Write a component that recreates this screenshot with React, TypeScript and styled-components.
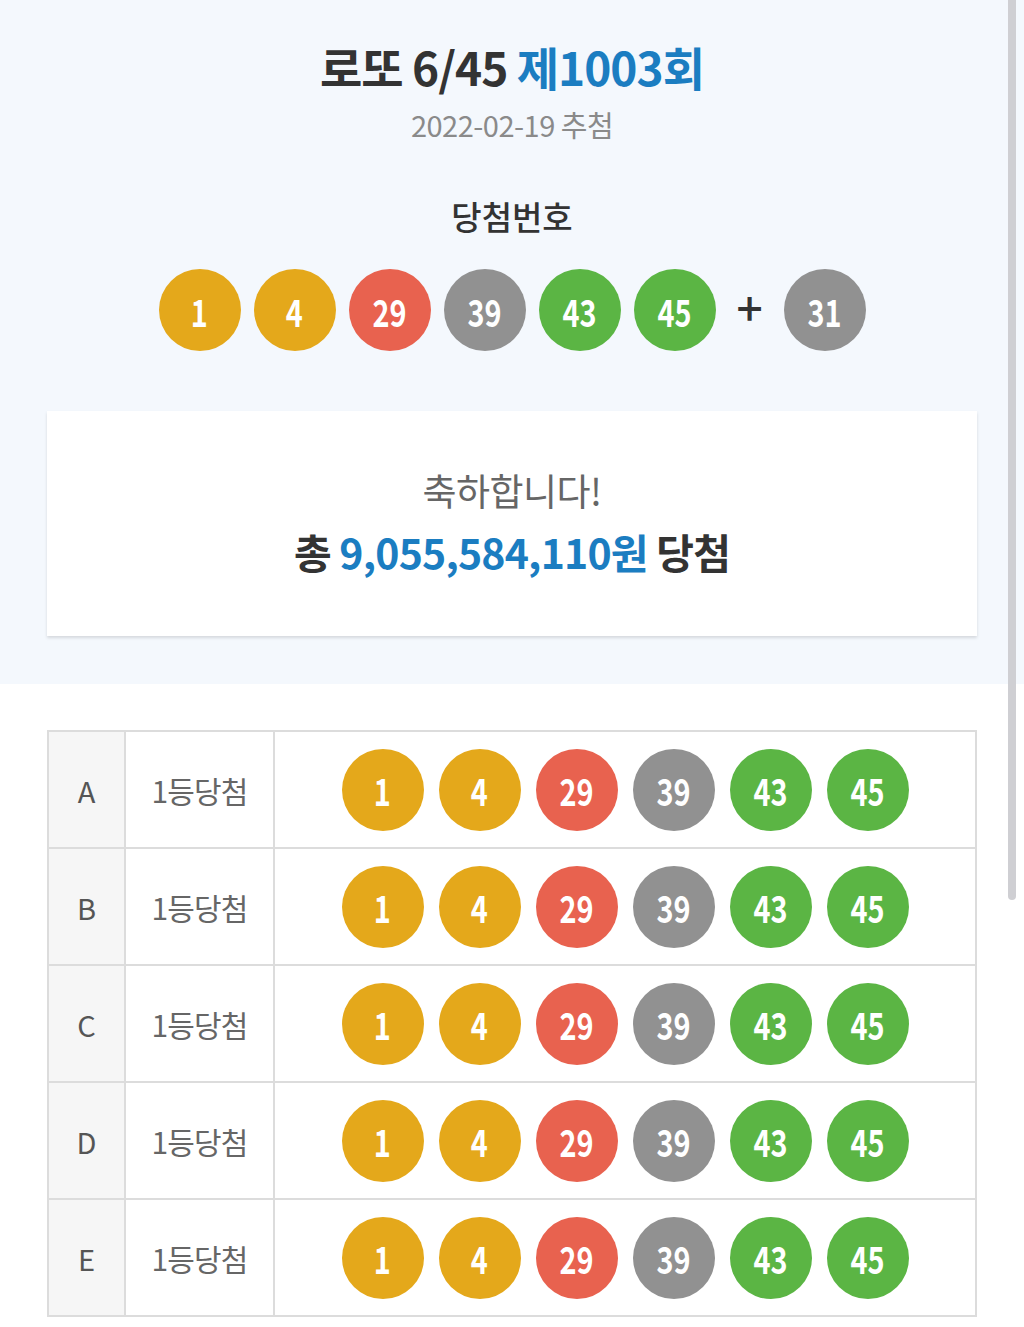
import React from 'react';
import styled, { createGlobalStyle } from 'styled-components';

const GlobalStyle = createGlobalStyle`
  html, body {
    margin: 0;
    padding: 0;
    background: #ffffff;
  }
  body {
    font-family: "Noto Sans CJK KR", "Noto Sans", sans-serif;
    color: #333;
  }
  * {
    box-sizing: border-box;
  }
`;

const Page = styled.div`
  position: relative;
  width: 1024px;
  min-height: 1327px;
  background: #fff;
`;

const Hero = styled.section`
  background: #f4f8fd;
  padding: 37px 47px 48px;
  display: flex;
  flex-direction: column;
  align-items: center;
`;

const Title = styled.h1`
  margin: 0;
  font-size: 46px;
  line-height: 58px;
  font-weight: 700;
  color: #333;
  letter-spacing: -1px;

  em {
    font-style: normal;
    color: #1b7dc1;
  }
`;

const DrawDate = styled.div`
  margin-top: 11px;
  font-size: 29px;
  line-height: 36px;
  color: #8a8a8a;
  letter-spacing: -0.5px;
`;

const SectionLabel = styled.h2`
  margin: 54px 0 0;
  font-size: 33px;
  line-height: 40px;
  font-weight: 500;
  color: #333;
`;

const BallRow = styled.div<{ $gap: number }>`
  display: flex;
  align-items: center;
  justify-content: center;
  gap: ${(p) => p.$gap}px;
`;

const WinRow = styled(BallRow)`
  margin-top: 33px;
`;

const BALL_COLORS: Record<string, string> = {
  yellow: '#e4a81b',
  blue: '#69c8f2',
  red: '#e8624f',
  gray: '#919191',
  green: '#5bb544',
};

const ballColor = (n: number) => {
  if (n <= 10) return BALL_COLORS.yellow;
  if (n <= 20) return BALL_COLORS.blue;
  if (n <= 30) return BALL_COLORS.red;
  if (n <= 40) return BALL_COLORS.gray;
  return BALL_COLORS.green;
};

const Ball = styled.span<{ $color: string }>`
  width: 82px;
  height: 82px;
  border-radius: 50%;
  background: ${(p) => p.$color};
  color: #fff;
  display: inline-flex;
  align-items: center;
  justify-content: center;
  font-size: 38px;
  font-weight: 700;
  flex-shrink: 0;

  span {
    display: inline-block;
    transform: scaleX(0.76);
  }
`;

const Plus = styled.span`
  width: 42px;
  text-align: center;
  font-size: 46px;
  line-height: 44px;
  font-weight: 500;
  color: #333;
  margin-top: -8px;
`;

const ResultCard = styled.div`
  margin-top: 60px;
  width: 930px;
  height: 225px;
  background: #fff;
  box-shadow: 0 2px 3px rgba(0, 0, 0, 0.13);
  padding-top: 57px;
  display: flex;
  flex-direction: column;
  align-items: center;
  gap: 14px;
`;

const Congrats = styled.div`
  font-size: 37px;
  line-height: 44px;
  font-weight: 400;
  color: #666;
  letter-spacing: -0.5px;
`;

const Total = styled.div`
  font-size: 41px;
  line-height: 50px;
  font-weight: 700;
  color: #333;
  letter-spacing: -0.8px;

  em {
    font-style: normal;
    color: #1b7dc1;
  }
`;

const Table = styled.div`
  margin: 46px 47px 0;
  border: 2px solid #dcdcdc;
  border-bottom: none;
`;

const Row = styled.div`
  display: grid;
  grid-template-columns: 77px 149px 1fr;
  height: 117px;
  border-bottom: 2px solid #dcdcdc;
`;

const SlotCell = styled.div`
  display: flex;
  align-items: center;
  justify-content: center;
  background: #f6f6f6;
  border-right: 2px solid #dcdcdc;
  font-size: 29px;
  color: #555;
`;

const RankCell = styled.div`
  display: flex;
  align-items: center;
  justify-content: center;
  border-right: 2px solid #dcdcdc;
  font-size: 30px;
  color: #666;
  letter-spacing: -0.8px;
`;

const NumbersCell = styled.div`
  display: flex;
  align-items: center;
  justify-content: center;
`;

const ScrollThumb = styled.div`
  position: absolute;
  top: 0;
  right: 8px;
  width: 8px;
  height: 900px;
  border-radius: 0 0 4px 4px;
  background: #cfcfd3;
`;

const winning = [1, 4, 29, 39, 43, 45];
const bonus = 31;
const games = ['A', 'B', 'C', 'D', 'E'];

export default function App() {
  return (
    <Page>
      <GlobalStyle />
      <Hero>
        <Title>
          로또 6/45 <em>제1003회</em>
        </Title>
        <DrawDate>2022-02-19 추첨</DrawDate>
        <SectionLabel>당첨번호</SectionLabel>
        <WinRow $gap={13}>
          {winning.map((n) => (
            <Ball key={n} $color={ballColor(n)}>
              <span>{n}</span>
            </Ball>
          ))}
          <Plus>+</Plus>
          <Ball $color={ballColor(bonus)}>
            <span>{bonus}</span>
          </Ball>
        </WinRow>
        <ResultCard>
          <Congrats>축하합니다!</Congrats>
          <Total>
            총 <em>9,055,584,110원</em> 당첨
          </Total>
        </ResultCard>
      </Hero>
      <Table>
        {games.map((g) => (
          <Row key={g}>
            <SlotCell>{g}</SlotCell>
            <RankCell>1등당첨</RankCell>
            <NumbersCell>
              <BallRow $gap={15}>
                {winning.map((n) => (
                  <Ball key={n} $color={ballColor(n)}>
                    <span>{n}</span>
                  </Ball>
                ))}
              </BallRow>
            </NumbersCell>
          </Row>
        ))}
      </Table>
      <ScrollThumb />
    </Page>
  );
}
